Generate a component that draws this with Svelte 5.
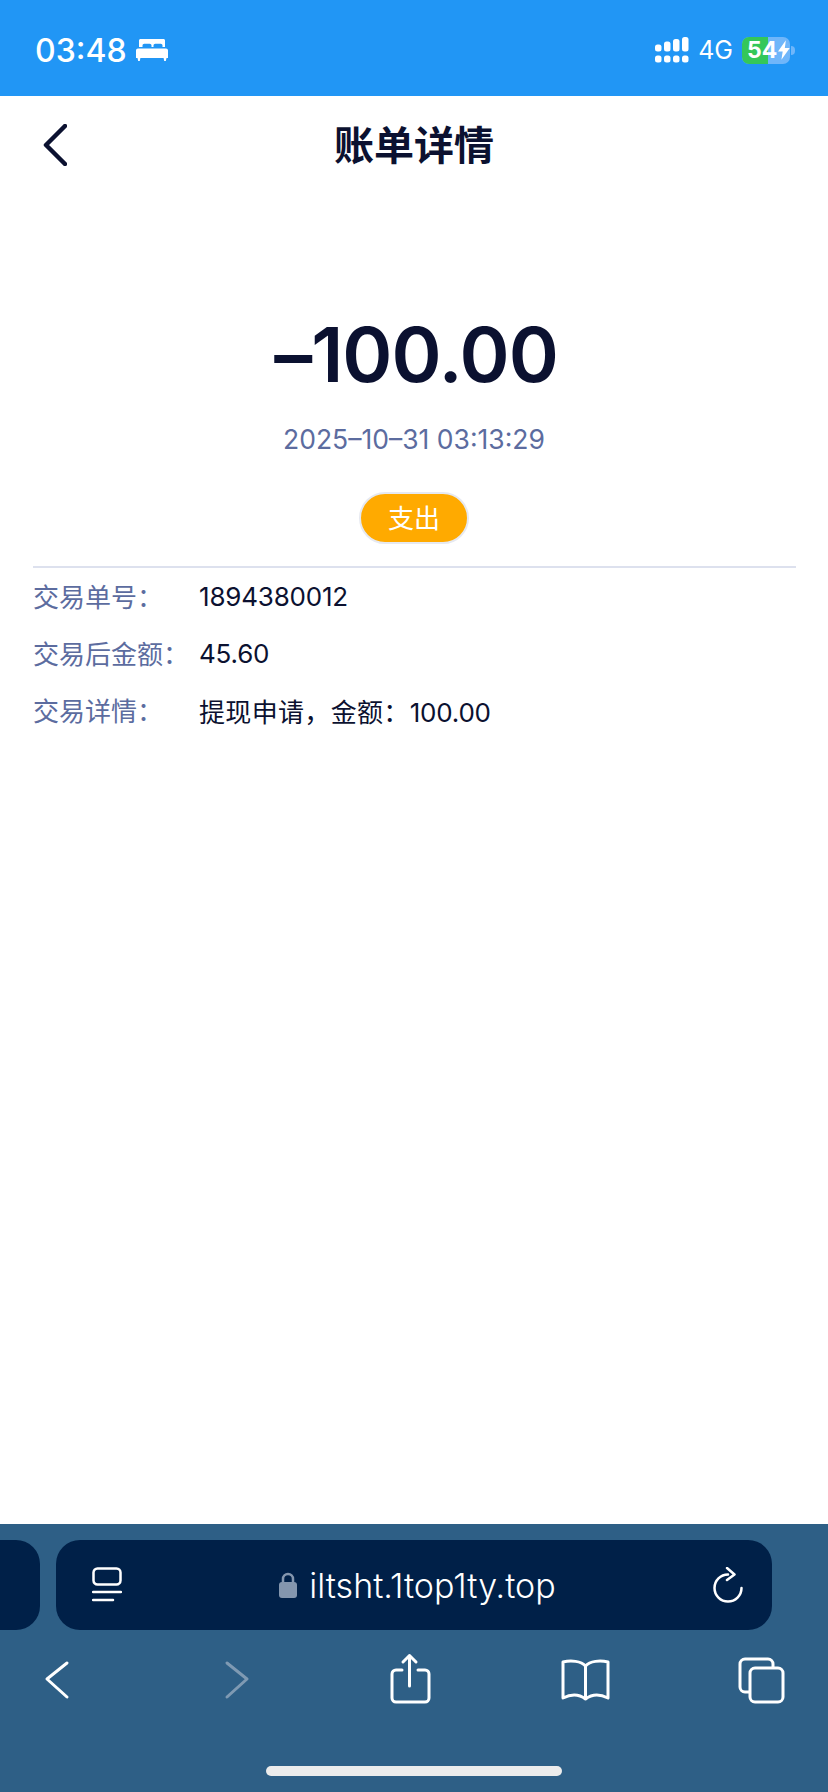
<script>
	// full-width punctuation, as in the page text
	const rows = [
		{ label: '交易单号\uFF1A', value: '1894380012' },
		{ label: '交易后金额\uFF1A', value: '45.60' },
		{ label: '交易详情\uFF1A', prefix: '提现申请\uFF0C金额\uFF1A', value: '100.00' }
	];
</script>

<div class="page">
	<div class="status">
		<div class="status-left">
			<span class="time">03:48</span>
			<svg class="bed" viewBox="0 0 32 22" width="32" height="22" fill="#fff">
				<path d="M3 1.500C3 .7 3.700 0 4.500 0h23c.8 0 1.500.7 1.500 1.500V8h-2.500V6.500c0-1-.8-1.800-1.800-1.800h-5.400c-1 0-1.800.8-1.800 1.800V8h-2V6.500c0-1-.8-1.800-1.800-1.800H8.300c-1 0-1.800.8-1.800 1.800V8H3z" />
				<path d="M2 9.500h28c1.100 0 2 .9 2 2V19h-1.500l-.7 3h-1.600l-.6-3H4.400l-.6 3H2.200l-.7-3H0v-7.500c0-1.100.9-2 2-2z" />
			</svg>
		</div>
		<div class="status-right">
			<svg class="signal" viewBox="0 0 34 26" width="34" height="26" fill="#fff">
				<rect x="0" y="7.500" width="6.500" height="7" rx="2.500" />
				<rect x="9" y="4.500" width="6.500" height="10" rx="2.500" />
				<rect x="18" y="2" width="6.500" height="12.500" rx="2.500" />
				<rect x="27" y="0" width="6.500" height="14.500" rx="2.500" />
				<rect x="0" y="18.500" width="6.500" height="7" rx="2.500" />
				<rect x="9" y="18.500" width="6.500" height="7" rx="2.500" />
				<rect x="18" y="18.500" width="6.500" height="7" rx="2.500" />
				<rect x="27" y="18.500" width="6.500" height="7" rx="2.500" />
			</svg>
			<span class="net">4G</span>
			<div class="battery">
				<div class="battery-fill"></div>
				<span class="battery-num">54</span>
				<svg class="bolt" viewBox="0 0 12 20" width="12" height="20" fill="#fff">
					<path d="M8 0 0 11.500h4.800L3.500 20 12 8H7z" />
				</svg>
				<span class="battery-tip"></span>
			</div>
		</div>
	</div>

	<header class="nav">
		<svg class="back" viewBox="0 0 24 42" width="24" height="42" fill="none" stroke="#0b1130" stroke-width="4.500" stroke-linecap="round" stroke-linejoin="round">
			<path d="M22 2 3 21l19 19" />
		</svg>
		<h1>账单详情</h1>
	</header>

	<section class="hero">
		<div class="amount">–100.00</div>
		<div class="date">2025–10–31 03:13:29</div>
		<div class="pill">支出</div>
	</section>

	<div class="details">
		{#each rows as row}
			<div class="row">
				<span class="label">{row.label}</span>
				<span class="value">{#if row.prefix}<span class="prefix">{row.prefix}</span>{/if}{row.value}</span>
			</div>
		{/each}
	</div>

	<div class="toolbar">
		<div class="url-row">
			<div class="stub"></div>
			<div class="url-bar">
				<svg viewBox="0 0 30 36" width="30" height="36" fill="none" stroke="#fff" stroke-width="2.500" stroke-linecap="round">
					<rect x="1.500" y="1.500" width="27" height="16" rx="4" />
					<path d="M1 25h28" />
					<path d="M1 33h20" />
				</svg>
				<div class="url">
					<svg viewBox="0 0 18 26" width="18" height="26">
						<path d="M4 11V7a5 5 0 0 1 10 0v4" fill="none" stroke="#8496ae" stroke-width="2.500" />
						<rect x="0" y="10" width="18" height="16" rx="3" fill="#8496ae" />
					</svg>
					<span>iltsht.1top1ty.top</span>
				</div>
				<svg viewBox="0 0 30 36" width="30" height="36" fill="none" stroke="#fff" stroke-width="2.500" stroke-linecap="round" stroke-linejoin="round">
					<path d="M15 7.500A13.500 13.500 0 1 0 28.500 21" />
					<path d="M14 1l7.500 6.500L14 13" />
				</svg>
			</div>
		</div>

		<div class="tool-row">
			<svg viewBox="0 0 44 54" width="44" height="54" fill="none" stroke="#fff" stroke-width="3" stroke-linecap="round" stroke-linejoin="round">
				<path d="M32 11 12 27l20 18" />
			</svg>
			<svg viewBox="0 0 44 54" width="44" height="54" fill="none" stroke="#7f9ab3" stroke-width="3" stroke-linecap="round" stroke-linejoin="round">
				<path d="M16 11l20 16-20 18" />
			</svg>
			<svg viewBox="0 0 44 54" width="44" height="54" fill="none" stroke="#fff" stroke-width="3" stroke-linecap="round" stroke-linejoin="round">
				<path d="M15 18h-6a4 4 0 0 0-4 4v24a4 4 0 0 0 4 4h29a4 4 0 0 0 4-4V22a4 4 0 0 0-4-4h-7" />
				<path d="M22.500 34V4" />
				<path d="M16 10l6.500-6.500L29 10" />
			</svg>
			<svg viewBox="0 0 44 54" width="44" height="54" fill="none" stroke="#fff" stroke-width="3" stroke-linecap="round" stroke-linejoin="round">
				<path d="M22.500 14C18 9 8 8 0 10v36c8-4 16-4 22.500 1 6.500-5 14.500-5 22.500-1V10c-8-2-18-1-22.500 4v33" />
			</svg>
			<svg viewBox="0 0 44 54" width="44" height="54" fill="none" stroke="#fff" stroke-width="3" stroke-linecap="round" stroke-linejoin="round">
				<rect x="11" y="16" width="33" height="34" rx="5" />
				<path d="M10 40H6a5 5 0 0 1-5-5V12a5 5 0 0 1 5-5h23a5 5 0 0 1 5 5v3" />
			</svg>
		</div>

		<div class="home"></div>
	</div>
</div>

<style>
	:global(body) {
		background: #fff;
	}
	.page {
		width: 828px;
		height: 1792px;
		display: flex;
		flex-direction: column;
		overflow: hidden;
		font-family: Inter, 'Noto Sans CJK SC', sans-serif;
		color: #0b1130;
	}
	.status {
		height: 96px;
		flex: none;
		background: #2196f5;
		display: flex;
		align-items: center;
		justify-content: space-between;
		color: #fff;
		padding: 4px 38px 0 35px;
		box-sizing: border-box;
	}
	.status-left,
	.status-right {
		display: flex;
		align-items: center;
	}
	.time {
		font-size: 32px;
		font-weight: 500;
	}
	.bed {
		margin-left: 9px;
	}
	.net {
		font-size: 25px;
		margin-left: 9px;
		margin-right: 9px;
	}
	.battery {
		position: relative;
		width: 48px;
		height: 27px;
		border-radius: 7px;
		background: #6fb6fa;
		display: flex;
		align-items: center;
		padding-left: 5px;
		box-sizing: border-box;
	}
	.battery-fill {
		position: absolute;
		left: 0;
		top: 0;
		bottom: 0;
		width: 26px;
		background: #34c759;
		border-radius: 7px 0 0 7px;
	}
	.battery-num {
		position: relative;
		font-size: 23px;
		font-weight: 700;
		line-height: 27px;
	}
	.bolt {
		position: relative;
		margin-left: 1px;
	}
	.battery-tip {
		position: absolute;
		right: -5px;
		top: 9px;
		width: 4px;
		height: 9px;
		background: #6fb6fa;
		border-radius: 0 4px 4px 0;
	}
	.nav {
		position: relative;
		height: 100px;
		flex: none;
		display: flex;
		align-items: center;
		justify-content: center;
		padding-bottom: 6px;
		box-sizing: border-box;
	}
	.back {
		position: absolute;
		left: 43px;
		top: 28px;
	}
	h1 {
		margin: 0;
		font-size: 40px;
		font-weight: 600;
	}
	.hero {
		display: flex;
		flex-direction: column;
		align-items: center;
		padding-top: 113px;
	}
	.amount {
		font-size: 76px;
		font-weight: 600;
		line-height: 90px;
		letter-spacing: -1px;
		padding-left: 4px;
	}
	.date {
		margin-top: 22px;
		font-size: 26.500px;
		line-height: 36px;
		color: #5c6c9f;
	}
	.pill {
		margin-top: 35px;
		width: 110px;
		height: 52px;
		box-sizing: border-box;
		border: 2px solid #e6e9f1;
		border-radius: 26px;
		padding-bottom: 3px;
		background: #ffaa00;
		color: #fff;
		font-size: 26px;
		display: flex;
		align-items: center;
		justify-content: center;
	}
	.details {
		margin: 22px 32px 0 33px;
		border-top: 2px solid #dde1ee;
	}
	.row {
		display: flex;
		align-items: center;
		height: 57px;
		font-size: 26px;
	}
	.label {
		width: 166px;
		flex: none;
		color: #5c6c9f;
		margin-bottom: 3px;
	}
	.value {
		letter-spacing: -0.2px;
		margin-bottom: 1px;
	}
	.prefix {
		letter-spacing: 0.33px;
	}
	.toolbar {
		margin-top: auto;
		height: 268px;
		flex: none;
		background: #2e5f86;
		display: flex;
		flex-direction: column;
	}
	.url-row {
		display: flex;
		gap: 16px;
		margin-top: 16px;
		height: 90px;
	}
	.stub {
		width: 40px;
		background: #002048;
		border-radius: 0 24px 24px 0;
	}
	.url-bar {
		width: 716px;
		background: #002048;
		border-radius: 24px;
		display: flex;
		align-items: center;
		justify-content: space-between;
		padding: 0 29px 0 36px;
		box-sizing: border-box;
	}
	.url {
		display: flex;
		align-items: center;
		gap: 12px;
		color: #fff;
		font-size: 34px;
		font-weight: 300;
	}
	.tool-row {
		display: flex;
		justify-content: space-between;
		margin-top: 22px;
		padding: 0 45px 0 35px;
	}
	.tool-row svg {
		overflow: visible;
	}
	.home {
		width: 296px;
		height: 10px;
		margin: 60px auto 0;
		border-radius: 5px;
		background: #ececec;
	}
</style>
